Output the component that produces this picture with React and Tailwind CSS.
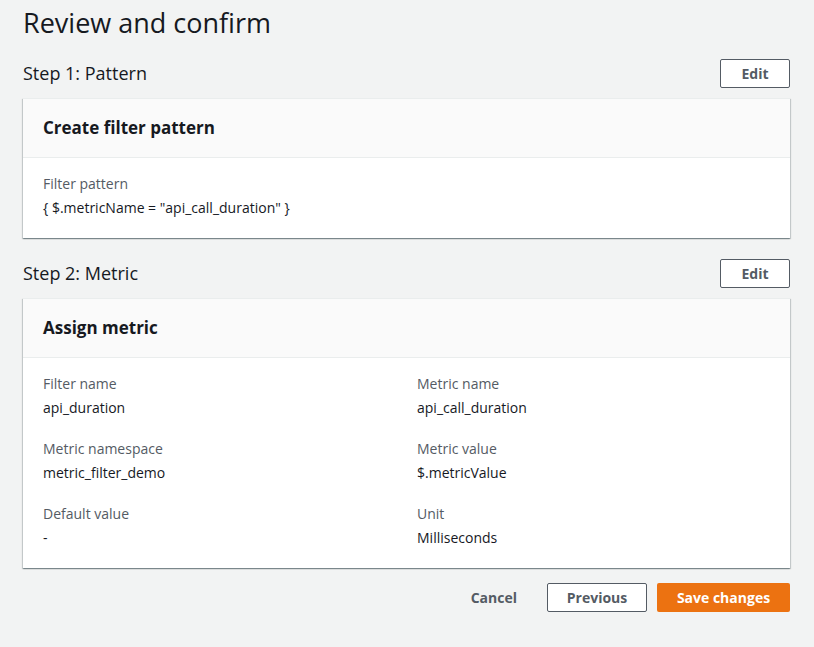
import React from 'react';

const font = { fontFamily: '"Open Sans", "Liberation Sans", Arial, sans-serif' };

const Field = ({ label, value }) => (
  <div>
    <div className="text-[14px] leading-[22px] text-[#545b64]">{label}</div>
    <div className="mt-[2px] text-[14px] leading-[22px] text-[#16191f]">{value}</div>
  </div>
);

const Card = ({ title, children }) => (
  <div className="bg-white border-t border-[#eaeded] shadow-[0_1px_1px_0_rgba(0,28,36,0.3),1px_1px_1px_0_rgba(0,28,36,0.15),-1px_1px_1px_0_rgba(0,28,36,0.15)]">
    <div className="h-[59px] flex items-center px-5 bg-[#fafafa] border-b border-[#eaeded]">
      <h3 className="text-[17px] font-bold text-[#16191f]">{title}</h3>
    </div>
    <div className="px-5 pt-[15px] pb-[19px]">{children}</div>
  </div>
);

const StepHeader = ({ title }) => (
  <div className="flex items-center justify-between h-[29px] mb-[10px]">
    <h2 className="text-[18px] text-[#16191f]">{title}</h2>
    <button className="h-[29px] w-[70px] rounded-[2px] border border-[#545b64] bg-white text-[14px] font-bold text-[#545b64]">
      Edit
    </button>
  </div>
);

export default function App() {
  return (
    <div style={font} className="min-h-[647px] bg-[#f2f3f3] pl-[23px] pr-[24px] pt-[3px]">
      <h1 className="text-[27px] leading-[40px] text-[#16191f]">Review and confirm</h1>
      <div className="mt-[16px]">
        <StepHeader title="Step 1: Pattern" />
        <Card title="Create filter pattern">
          <Field label="Filter pattern" value={'{ $.metricName = "api_call_duration" }'} />
        </Card>
      </div>
      <div className="mt-[21px]">
        <StepHeader title="Step 2: Metric" />
        <Card title="Assign metric">
          <div className="grid grid-cols-2 gap-x-[21px] gap-y-[19px]">
            <Field label="Filter name" value="api_duration" />
            <Field label="Metric name" value="api_call_duration" />
            <Field label="Metric namespace" value="metric_filter_demo" />
            <Field label="Metric value" value="$.metricValue" />
            <Field label="Default value" value="-" />
            <Field label="Unit" value="Milliseconds" />
          </div>
        </Card>
      </div>
      <div className="mt-[15px] flex justify-end items-center gap-[10px]">
        <button className="h-[29px] px-5 text-[14px] font-bold text-[#545b64]">Cancel</button>
        <button className="h-[29px] w-[100px] rounded-[2px] border border-[#545b64] bg-white text-[14px] font-bold text-[#545b64]">
          Previous
        </button>
        <button className="h-[29px] w-[133px] rounded-[2px] bg-[#ec7211] text-[14px] font-bold text-white">
          Save changes
        </button>
      </div>
    </div>
  );
}
